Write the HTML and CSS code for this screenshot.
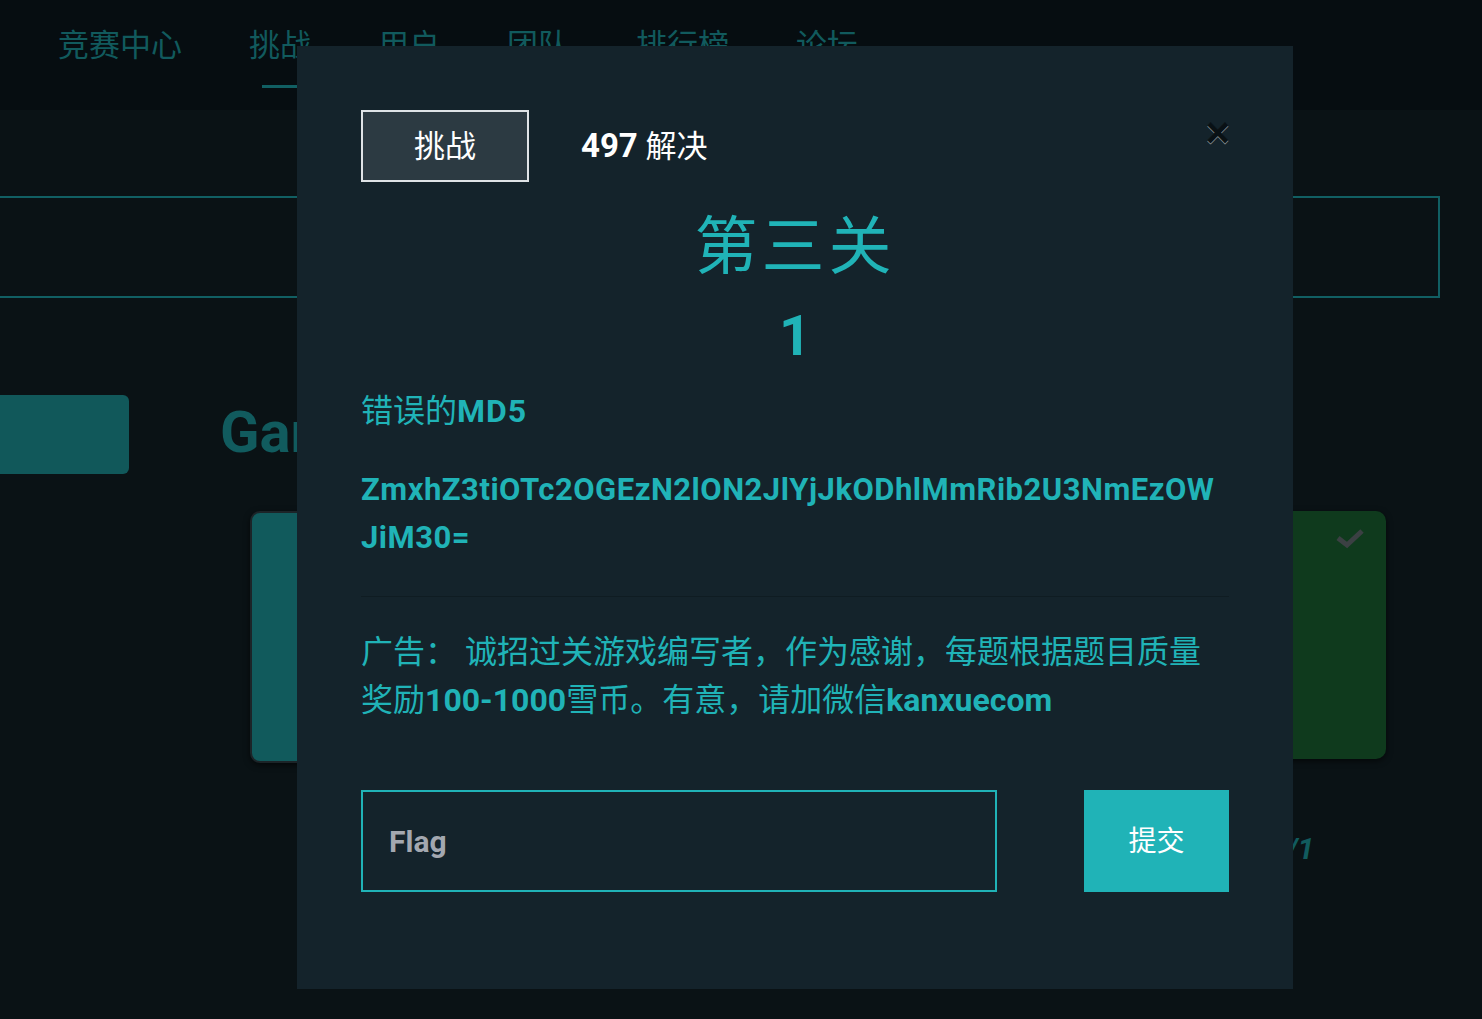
FILE: index.html
```html
<!DOCTYPE html>
<html lang="zh-CN">
<head>
    <meta charset="UTF-8">
    <meta name="viewport" content="width=device-width, initial-scale=1.0">
    <title>挑战</title>
    <link rel="stylesheet" href="styles.css">
</head>
<body>
    <nav class="top-nav">
        <a class="nav-item">竞赛中心</a>
        <a class="nav-item active">挑战</a>
        <a class="nav-item">用户</a>
        <a class="nav-item">团队</a>
        <a class="nav-item">排行榜</a>
        <a class="nav-item">论坛</a>
    </nav>

    <main class="page">
        <div class="search-box"></div>

        <div class="category-row">
            <div class="category-btn"></div>
            <h2 class="category-title">Game</h2>
        </div>

        <div class="card-grid">
            <div class="chal-card teal"></div>
            <div class="chal-card green">
                <svg class="solved-check" viewBox="0 0 28 22" width="28" height="22">
                    <path d="M2 11 L11 18 L26 4" fill="none" stroke="#3b4043" stroke-width="5"/>
                </svg>
            </div>
        </div>
        <div class="page-count">1/1</div>
    </main>

    <div class="modal">
        <div class="modal-head">
            <div class="tab-box">挑战</div>
            <div class="solves"><b>497</b> 解决</div>
            <span class="close">&times;</span>
        </div>

        <h1 class="chal-name">第三关</h1>
        <div class="chal-value">1</div>

        <p class="chal-desc">错误的<b>MD5</b></p>
        <p class="chal-code">ZmxhZ3tiOTc2OGEzN2lON2JlYjJkODhlMmRib2U3NmEzOWJiM30=</p>

        <hr class="sep">

        <p class="chal-ad">广告： 诚招过关游戏编写者，作为感谢，每题根据题目质量奖励<b>100-1000</b>雪币。有意，请加微信<b>kanxuecom</b></p>

        <form class="flag-form" onsubmit="return false;">
            <input class="flag-input" type="text" placeholder="Flag">
            <button class="flag-submit" type="submit">提交</button>
        </form>
    </div>
</body>
</html>
```

FILE: styles.css
```css
body {
    margin: 0;
    background: #0a1215;
    font-family: Roboto, "Noto Sans CJK SC", sans-serif;
    min-height: 1019px;
    overflow: hidden;
}

.top-nav {
    height: 110px;
    background: #060d11;
    display: flex;
    align-items: center;
    padding-left: 24.5px;
    box-sizing: border-box;
}

.nav-item {
    position: relative;
    padding: 0 33.5px;
    font-size: 31px;
    color: #115a5d;
    line-height: 40px;
    margin-top: -18px;
}

.nav-item.active::after {
    content: "";
    position: absolute;
    left: 46px;
    top: 59px;
    width: 52px;
    height: 3px;
    background: #115f63;
}

.page {
    padding-top: 86px;
}

.search-box {
    margin-left: -20px;
    width: 1460px;
    height: 102px;
    border: 2px solid #115f63;
    box-sizing: border-box;
}

.category-row {
    display: flex;
    align-items: center;
    margin-top: 97px;
}

.category-btn {
    width: 139px;
    height: 79px;
    margin-left: -10px;
    background: #11585a;
    border-radius: 6px;
}

.category-title {
    margin: -6px 0 0 91px;
    font-size: 58px;
    font-weight: 700;
    color: #115b5e;
}

.card-grid {
    display: grid;
    grid-template-columns: 1fr 1fr;
    gap: 30px;
    margin: 37px 96px 0 250px;
}

.chal-card {
    height: 248px;
    border-radius: 10px;
    box-shadow: 0 2px 6px rgba(0, 0, 0, 0.6);
    position: relative;
}

.chal-card.teal {
    background: #115a5c;
    border: 2px solid #1c2428;
}

.chal-card.green {
    background: #0f3a1d;
}

.solved-check {
    position: absolute;
    top: 16px;
    right: 22px;
}

.page-count {
    margin: 68px 0 0 1270px;
    font-size: 30px;
    font-weight: 700;
    font-style: italic;
    color: #115b5e;
}

/* modal */
.modal {
    position: absolute;
    left: 297px;
    top: 46px;
    width: 996px;
    height: 943px;
    box-sizing: border-box;
    padding: 64px 64px 0;
    background: #14232b;
}

.modal-head {
    display: flex;
    align-items: center;
    position: relative;
}

.tab-box {
    width: 168px;
    height: 72px;
    box-sizing: border-box;
    border: 2px solid #dfe3e6;
    background: #2c3a42;
    color: #fff;
    font-size: 31px;
    display: flex;
    align-items: center;
    justify-content: center;
    padding-bottom: 5px;
}

.solves {
    margin-left: 52px;
    margin-top: -6px;
    color: #fff;
    font-size: 31px;
}

.solves b {
    font-size: 33px;
}

.close {
    position: absolute;
    right: -1px;
    top: 2px;
    font-family: "Liberation Sans", sans-serif;
    font-size: 42px;
    font-weight: 700;
    line-height: 1;
    color: #000;
    text-shadow: 0 1px 0 #fff;
    opacity: 0.5;
}

.chal-name {
    margin: 26px 0 0;
    text-align: center;
    font-size: 63px;
    font-weight: 400;
    line-height: 77px;
    color: #20b3b7;
    letter-spacing: 4px;
}

.chal-value {
    margin-top: 18px;
    text-align: center;
    font-size: 56px;
    font-weight: 700;
    line-height: 67px;
    color: #20b3b7;
}

.chal-desc,
.chal-code,
.chal-ad {
    margin: 0;
    font-size: 32px;
    line-height: 48px;
    color: #20b3b7;
}

.chal-desc {
    margin-top: 17px;
}

.chal-desc b {
    letter-spacing: 1px;
}

.chal-code {
    margin-top: 31px;
    font-size: 31px;
    font-weight: 700;
    letter-spacing: 0.5px;
    word-break: break-all;
}

.sep {
    margin: 34px 0 0;
    border: 0;
    border-top: 1px solid #0f1c22;
}

.chal-ad {
    margin-top: 31px;
}

.flag-form {
    display: flex;
    justify-content: space-between;
    margin-top: 66px;
}

.flag-input {
    width: 636px;
    height: 102px;
    box-sizing: border-box;
    border: 2px solid #20b3b7;
    background: #14232b;
    padding: 0 26px;
    font-family: Roboto, sans-serif;
    font-size: 30px;
    font-weight: 700;
    color: #fff;
    outline: none;
}

.flag-input::placeholder {
    color: #a3a8b0;
}

.flag-submit {
    width: 145px;
    height: 102px;
    border: 0;
    background: #20b3b7;
    color: #fff;
    font-family: "Noto Sans CJK SC", sans-serif;
    font-size: 28px;
    padding-bottom: 6px;
    cursor: pointer;
}
```
